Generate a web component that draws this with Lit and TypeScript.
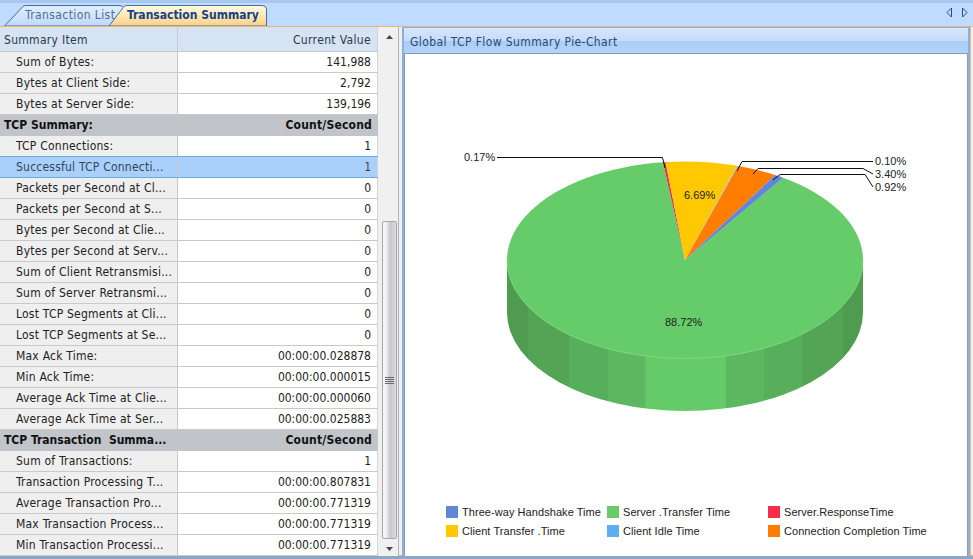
import { css, html, svg, LitElement } from "lit";
import { customElement } from "lit/decorators.js";

interface Row {
  label: string;
  value: string;
  kind?: "group" | "selected";
}

const rows: Row[] = [
  { label: "Sum of Bytes:", value: "141,988" },
  { label: "Bytes at Client Side:", value: "2,792" },
  { label: "Bytes at Server Side:", value: "139,196" },
  { label: "TCP Summary:", value: "Count/Second", kind: "group" },
  { label: "TCP Connections:", value: "1" },
  { label: "Successful TCP Connecti...", value: "1", kind: "selected" },
  { label: "Packets per Second at Cl...", value: "0" },
  { label: "Packets per Second at S...", value: "0" },
  { label: "Bytes per Second at Clie...", value: "0" },
  { label: "Bytes per Second at Serv...", value: "0" },
  { label: "Sum of Client Retransmisi...", value: "0" },
  { label: "Sum of Server Retransmi...", value: "0" },
  { label: "Lost TCP Segments at Cli...", value: "0" },
  { label: "Lost TCP Segments at Se...", value: "0" },
  { label: "Max Ack Time:", value: "00:00:00.028878" },
  { label: "Min Ack Time:", value: "00:00:00.000015" },
  { label: "Average Ack Time at Clie...", value: "00:00:00.000060" },
  { label: "Average Ack Time at Ser...", value: "00:00:00.025883" },
  { label: "TCP Transaction  Summa...", value: "Count/Second", kind: "group" },
  { label: "Sum of Transactions:", value: "1" },
  { label: "Transaction Processing T...", value: "00:00:00.807831" },
  { label: "Average Transaction Pro...", value: "00:00:00.771319" },
  { label: "Max Transaction Process...", value: "00:00:00.771319" },
  { label: "Min Transaction Processi...", value: "00:00:00.771319" },
];

const legend = [
  { color: "#5f87d3", label: "Three-way Handshake Time" },
  { color: "#65cc69", label: "Server .Transfer Time" },
  { color: "#f22e48", label: "Server.ResponseTime" },
  { color: "#ffc800", label: "Client Transfer .Time" },
  { color: "#5fadf2", label: "Client Idle Time" },
  { color: "#ff7d00", label: "Connection Completion Time" },
];

// pie geometry, in page coordinates
const CX = 685;
const CY = 260;
const RX = 178;
const RY = 98.5;
const DEPTH = 52.5;

const topY = (x: number) =>
  CY - RY * Math.sqrt(1 - ((x - CX) / RX) ** 2);

const slice = (from: number, to: number, color: string, large = 0) =>
  svg`<path fill=${color} d="M${CX} ${CY}L${from} ${topY(from)}A${RX} ${RY} 0 ${large} 1 ${to} ${topY(to)}Z"></path>`;

const bands = [
  [507, 21, "#4f9c50"],
  [528, 41, "#53a455"],
  [569, 39, "#58af5b"],
  [608, 36, "#5db760"],
  [644, 2, "#5fbd63"],
  [646, 80, "#65cb69"],
  [726, 38, "#5db760"],
  [764, 38, "#58af5b"],
  [802, 41, "#53a455"],
  [843, 20, "#4f9c50"],
] as const;

const leaders = [
  "M497 157.5H662.5L665 168",
  "M873 161.5H742L737 171",
  "M873 174L863 168.5H758L753 174",
  "M873 187L865 174.5H780L773 180",
];

@customElement("app-root")
export class AppRoot extends LitElement {
  renderChart() {
    return html`
      <svg class="pie" viewBox="405 54 563 446" width="563" height="446">
        <defs>
          <clipPath id="side">
            <path d="M${CX - RX} ${CY}V${CY + DEPTH}A${RX} ${RY} 0 0 0 ${CX + RX} ${CY + DEPTH}V${CY}Z"></path>
          </clipPath>
        </defs>
        <g clip-path="url(#side)">
          ${bands.map(
            ([x, w, c]) => svg`<rect x=${x} y=${CY} width=${w} height=${DEPTH + RY + 2} fill=${c}></rect>`
          )}
        </g>
        ${slice(783, 663, "#65cc69", 1)}
        ${slice(663, 665.5, "#f22e48")}
        ${slice(665.5, 737, "#ffc800")}
        ${slice(737, 738, "#8fc0e8")}
        ${slice(738, 775, "#ff7d00")}
        ${slice(775, 783, "#5f87d3")}
        <path class="rim" d="M${CX - RX} ${CY}A${RX} ${RY} 0 0 0 ${CX + RX} ${CY}"></path>
        ${leaders.map((d) => svg`<path class="leader" d=${d}></path>`)}
        <text x="464" y="161">0.17%</text>
        <text x="875" y="165">0.10%</text>
        <text x="875" y="178">3.40%</text>
        <text x="875" y="191">0.92%</text>
        <text x="684" y="199">6.69%</text>
        <text x="665" y="326">88.72%</text>
      </svg>
    `;
  }

  render() {
    return html`
      <div class="app">
        <div class="tabs">
          <div class="tab">
            <svg class="tab-bg" width="120" height="21" viewBox="0 0 120 21">
              <defs>
                <linearGradient id="idle" x1="0" y1="0" x2="0" y2="1">
                  <stop offset="0" stop-color="#e2eefd"></stop>
                  <stop offset="1" stop-color="#bfd9fb"></stop>
                </linearGradient>
              </defs>
              <path d="M0.5 21L19 1.5Q20 0.5 22 0.5H115Q119 0.5 120 3V21Z" fill="url(#idle)" stroke="#3f6fae"></path>
            </svg>
            <span>Transaction List</span>
          </div>
          <div class="tab active">
            <svg class="tab-bg" width="160" height="21" viewBox="0 0 160 21">
              <defs>
                <linearGradient id="hot" x1="0" y1="0" x2="0" y2="1">
                  <stop offset="0" stop-color="#fffbe4"></stop>
                  <stop offset="0.5" stop-color="#fee9b2"></stop>
                  <stop offset="1" stop-color="#fdce83"></stop>
                </linearGradient>
              </defs>
              <path d="M0 21L15 1.5Q16 0.5 18 0.5H153Q157 0.5 157.5 4V21Z" fill="url(#hot)" stroke="#3f6fae"></path>
            </svg>
            <span>Transaction Summary</span>
          </div>
          <div class="pager">
            <svg width="7" height="11" viewBox="0 0 7 11"><path d="M5.5 1V10L1 5.5Z" fill="none" stroke="#1f4f9c"></path></svg>
            <svg width="7" height="11" viewBox="0 0 7 11"><path d="M1.5 1V10L6 5.5Z" fill="none" stroke="#1f4f9c"></path></svg>
          </div>
        </div>
        <div class="body">
          <div class="table">
            <div class="row head">
              <div class="cell name">Summary Item</div>
              <div class="cell value">Current Value</div>
            </div>
            ${rows.map(
              (r) => html`
                <div class="row ${r.kind ?? ""}">
                  <div class="cell name">${r.label}</div>
                  <div class="cell value">${r.value}</div>
                </div>
              `
            )}
          </div>
          <div class="scroll">
            <svg width="7" height="4" viewBox="0 0 7 4"><path d="M3.5 0L7 4H0Z" fill="#4a4a4a"></path></svg>
            <div class="track">
              <div class="thumb">
                <svg width="9" height="7" viewBox="0 0 9 7">
                  <path d="M0 .5H9M0 2.5H9M0 4.5H9M0 6.5H9" stroke="#6a6a6a"></path>
                </svg>
              </div>
            </div>
            <svg width="7" height="4" viewBox="0 0 7 4"><path d="M0 0H7L3.5 4Z" fill="#4a4a4a"></path></svg>
          </div>
          <div class="panel">
            <div class="panel-title">Global TCP Flow Summary Pie-Chart</div>
            <div class="chart">
              ${this.renderChart()}
              <div class="legend">
                ${legend.map(
                  (l) => html`
                    <div class="key">
                      <i style="background:${l.color}"></i>
                      <span>${l.label}</span>
                    </div>
                  `
                )}
              </div>
            </div>
          </div>
        </div>
      </div>
    `;
  }

  static styles = css`
    :host {
      display: block;
      width: 973px;
      height: 559px;
      overflow: hidden;
      font-family: "DejaVu Sans", sans-serif;
      font-stretch: condensed;
      font-size: 12px;
      color: #222;
    }

    .app {
      display: flex;
      flex-direction: column;
      height: 100%;
      background: #f0f0f0;
    }

    .tabs {
      display: flex;
      align-items: flex-end;
      height: 27px;
      box-sizing: border-box;
      flex: none;
      padding-left: 4px;
      background: #bfdbff;
      border-top: 3px solid #a9c6ee;
      border-bottom: 1px solid #e3b878;
    }

    .tab {
      position: relative;
      height: 21px;
      width: 120px;
      flex: none;
      color: #4f6f96;
      font-size: 12px;
      line-height: 21px;
      letter-spacing: 0.4px;
    }

    .tab span {
      position: relative;
      padding-left: 21px;
      white-space: nowrap;
    }

    .tab-bg {
      position: absolute;
      left: 0;
      top: 0;
    }

    .tab.active {
      width: 160px;
      margin-left: -15px;
      color: #14418c;
      font-weight: 700;
      letter-spacing: 0;
    }

    .tab.active span {
      padding-left: 18px;
    }

    .pager {
      margin-left: auto;
      display: flex;
      gap: 8px;
      padding: 0 5px 8px 0;
    }

    .pager svg {
      display: block;
    }

    .body {
      flex: 1;
      display: flex;
      min-height: 0;
      border-bottom: 3px solid #8da5c6;
      box-shadow: inset 0 -1px 0 #e8b866;
    }

    .table {
      width: 378px;
      flex: none;
      background: #fff;
    }

    .row {
      display: grid;
      grid-template-columns: 178px 200px;
      height: 21px;
      box-sizing: border-box;
      border-bottom: 1px solid #c9c9c9;
      line-height: 21px;
    }

    .cell {
      white-space: pre;
      overflow: hidden;
    }

    .name {
      padding-left: 16px;
      background: #efefef;
      border-right: 1px solid #c9c9c9;
      letter-spacing: 0.22px;
    }

    .value {
      padding-right: 6px;
      text-align: right;
      border-right: 1px solid #d4d4d4;
    }

    .head {
      height: 25px;
      line-height: 26px;
      background: #d6e3f2;
      color: #2c3a4c;
    }

    .head .name {
      padding-left: 4px;
      background: none;
      letter-spacing: 0.3px;
    }

    .head .value {
      letter-spacing: 0.35px;
    }

    .group {
      background: #c1c4c8;
      border-bottom-color: #c1c4c8;
      font-weight: 700;
      color: #111;
    }

    .group .name {
      padding-left: 4px;
      background: none;
      border-right: none;
      letter-spacing: 0;
    }

    .group .value {
      letter-spacing: 0.2px;
      border-right: none;
    }

    .selected {
      background: #a9d0fb;
      border-top: 1px solid #6fa8e0;
      border-bottom-color: #6fa8e0;
      margin-top: -1px;
      height: 22px;
      color: #33445c;
    }

    .selected .name {
      background: none;
    }

    .scroll {
      width: 21px;
      flex: none;
      display: flex;
      flex-direction: column;
      align-items: center;
      padding: 8px 1px 5px 4px;
      box-sizing: border-box;
      background: #f0f0f0;
      border-right: 1px solid #aeb4bc;
    }

    .scroll svg {
      flex: none;
    }

    .track {
      flex: 1;
      width: 100%;
      display: flex;
      flex-direction: column;
      justify-content: flex-end;
      padding: 0 0 8px;
    }

    .thumb {
      height: 318px;
      display: flex;
      align-items: center;
      justify-content: center;
      box-sizing: border-box;
      border: 1px solid #a8a8a8;
      border-radius: 2px;
      background: linear-gradient(90deg, #f6f6f6, #f0f0f2 25%, #c6c7cc 55%, #dcdcdf);
    }

    .panel {
      flex: 1;
      margin-left: 3px;
      margin-right: 3px;
      display: flex;
      flex-direction: column;
      border: 2px solid #8db0de;
      border-top-width: 1px;
      border-bottom: none;
      background: #b8d4f6;
      box-shadow: 1px 0 0 #e3b878;
      min-width: 0;
    }

    .panel-title {
      height: 25px;
      flex: none;
      box-sizing: border-box;
      padding-left: 6px;
      line-height: 28px;
      font-size: 12px;
      letter-spacing: 0.4px;
      color: #2a4a75;
      background: linear-gradient(#d4e6fd, #c6dcfb 50%, #a9cdf6 52%, #b4d3f8);
    }

    .chart {
      flex: 1;
      display: flex;
      flex-direction: column;
      background: #fff;
      border: 1px solid #8a9cb4;
      border-bottom: none;
      min-height: 0;
    }

    .pie {
      display: block;
      flex: none;
    }

    .pie text {
      font: 11px "Liberation Sans", Arial, sans-serif;
      fill: #222;
    }

    .leader {
      fill: none;
      stroke: #111;
      stroke-width: 1;
    }

    .rim {
      fill: none;
      stroke: #86da89;
      stroke-width: 0.8;
    }

    .legend {
      display: grid;
      grid-template-columns: repeat(3, 161px);
      row-gap: 7px;
      padding: 6px 0 0 41px;
      font: 11px "Liberation Sans", Arial, sans-serif;
      letter-spacing: 0.06px;
    }

    .key {
      display: flex;
      align-items: center;
      gap: 4px;
      height: 12px;
      white-space: nowrap;
    }

    .key i {
      width: 12px;
      height: 12px;
      flex: none;
    }
  `;
}
